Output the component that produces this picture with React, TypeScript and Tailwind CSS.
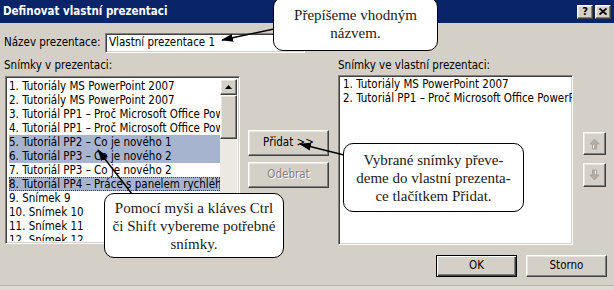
import React from "react";

const ui = { fontFamily: '"DejaVu Sans Condensed", "Liberation Sans", sans-serif' };
const serif = { fontFamily: '"Liberation Serif", "DejaVu Serif", serif' };

const raised =
  "border border-t-white border-l-white border-r-[#404040] border-b-[#404040] shadow-[inset_-1px_-1px_0_#808080,inset_1px_1px_0_#e8e6e0] bg-[#d4d0c8]";
const sunken =
  "border border-t-[#808080] border-l-[#808080] border-r-white border-b-white shadow-[inset_1px_1px_0_#404040,inset_-1px_-1px_0_#d4d0c8] bg-white";

const leftRows = [
  "1. Tutoriály MS PowerPoint 2007",
  "2. Tutoriály MS PowerPoint 2007",
  "3. Tutoriál PP1 – Proč Microsoft Office PowerPoint",
  "4. Tutoriál PP1 – Proč Microsoft Office PowerPoint",
  "5. Tutoriál PP2 – Co je nového 1",
  "6. Tutoriál PP3 – Co je nového 2",
  "7. Tutoriál PP3 – Co je nového 2",
  "8. Tutoriál PP4 – Práce s panelem rychlého přístupu",
  "9. Snímek 9",
  "10. Snímek 10",
  "11. Snímek 11",
  "12. Snímek 12",
];
const selected = [4, 5, 7];

function ArrowIcon({ down }: { down?: boolean }) {
  return (
    <svg width="11" height="12" viewBox="0 0 11 12" className={down ? "rotate-180" : ""}>
      <path d="M5.5 1 L10 6 L7.5 6 L7.5 11 L3.5 11 L3.5 6 L1 6 Z" fill="#b4b0a8" stroke="#a09c94" strokeWidth="0.8" />
      <path d="M4.5 7 L4.5 10.5" stroke="#ffffff" strokeWidth="0.8" />
    </svg>
  );
}

function Callout({ className, lines }: { className: string; lines: string[] }) {
  return (
    <div
      className={
        "absolute bg-white border border-black rounded-[10px] flex flex-col items-center justify-center text-[15px] leading-[18px] text-[#1a1a1a] " +
        className
      }
      style={serif}
    >
      {lines.map((l, i) => (
        <div key={i} className="whitespace-nowrap">
          {l}
        </div>
      ))}
    </div>
  );
}

export default function App() {
  return (
    <div className="w-[614px] h-[290px] bg-[#d4d0c8] relative overflow-hidden text-[11.5px] text-black" style={ui}>
      {/* title bar */}
      <div className="h-[23px] bg-[#0a246a] flex items-center justify-between pl-[3px] pr-[3px]">
        <span className="text-white font-bold text-[11.5px]">Definovat vlastní prezentaci</span>
        <div className="flex gap-[2px]">
          <div className={"w-[16px] h-[14px] flex items-center justify-center font-bold text-[11px] leading-none " + raised}>?</div>
          <div className={"w-[16px] h-[14px] flex items-center justify-center " + raised}>
            <svg width="8" height="7" viewBox="0 0 8 7">
              <path d="M0.5 0.5 L7.5 6.5 M7.5 0.5 L0.5 6.5" stroke="black" strokeWidth="1.8" />
            </svg>
          </div>
        </div>
      </div>

      {/* name row */}
      <div className="flex items-center h-[20px] mt-[10px] pl-[4px]">
        <span className="w-[101px]">Název prezentace:</span>
        <div className={"w-[200px] h-[20px] flex items-center pl-[3px] " + sunken}>Vlastní prezentace 1</div>
      </div>

      {/* main area */}
      <div className="flex mt-[5px]">
        {/* left column */}
        <div className="ml-[5px] w-[235px] flex flex-col">
          <div className="h-[14px] leading-[14px] -ml-[1px]">Snímky v prezentaci:</div>
          <div className={"mt-[4px] h-[168px] flex p-[2px] " + sunken}>
            <div className="flex-1 overflow-hidden pl-[1px]">
              {leftRows.map((r, i) => (
                <div
                  key={i}
                  className={
                    "h-[14px] leading-[14px] whitespace-nowrap overflow-hidden " +
                    (selected.includes(i) ? "bg-[#a7b4cf] " : "") +
                    (i === 7 ? "outline outline-1 outline-dotted outline-[#404040] -outline-offset-1" : "")
                  }
                >
                  {r}
                </div>
              ))}
            </div>
            <div className="w-[17px] flex flex-col bg-[#ece9e3]">
              <div className={"h-[16px] flex items-center justify-center " + raised}>
                <svg width="7" height="4" viewBox="0 0 7 4">
                  <path d="M3.5 0 L7 4 L0 4 Z" fill="black" />
                </svg>
              </div>
              <div className={"h-[44px] " + raised}></div>
            </div>
          </div>
        </div>

        {/* middle buttons */}
        <div className="ml-[8px] w-[81px] flex flex-col pt-[72px] gap-[6px]">
          <div className={"h-[26px] flex items-center justify-center " + raised}>Přidat &gt;&gt;</div>
          <div className={"h-[26px] flex items-center justify-center text-[#808080] [text-shadow:1px_1px_0_#ffffff] " + raised}>
            Odebrat
          </div>
        </div>

        {/* right column */}
        <div className="ml-[9px] w-[235px] flex flex-col">
          <div className="h-[14px] leading-[14px]">Snímky ve vlastní prezentaci:</div>
          <div className={"mt-[3px] h-[170px] p-[2px] pl-[4px] pt-[1px] overflow-hidden " + sunken}>
            <div className="h-[14px] leading-[14px] whitespace-nowrap">1. Tutoriály MS PowerPoint 2007</div>
            <div className="h-[14px] leading-[14px] whitespace-nowrap">2. Tutoriál PP1 – Proč Microsoft Office PowerPoint</div>
          </div>
        </div>

        {/* up/down */}
        <div className="ml-[10px] w-[23px] flex flex-col pt-[74px] gap-[8px]">
          <div className={"h-[23px] flex items-center justify-center " + raised}>
            <ArrowIcon />
          </div>
          <div className={"h-[24px] flex items-center justify-center " + raised}>
            <ArrowIcon down />
          </div>
        </div>
      </div>

      {/* bottom buttons */}
      <div className="flex justify-end gap-[9px] pr-[7px] mt-[10px]">
        <div className="w-[81px] h-[22px] flex items-center justify-center border border-black bg-[#d4d0c8] shadow-[inset_1px_1px_0_#ffffff,inset_-1px_-1px_0_#404040,inset_-2px_-2px_0_#808080]">
          OK
        </div>
        <div className={"w-[81px] h-[22px] flex items-center justify-center " + raised}>Storno</div>
      </div>

      <div className="absolute left-0 right-0 bottom-0 h-[5px] border-t border-[#b8b4ac] bg-[#dedbd5]"></div>

      {/* arrows */}
      <svg className="absolute left-0 top-0 pointer-events-none" width="614" height="290" viewBox="0 0 614 290">
        <defs>
          <marker id="ah" markerWidth="12" markerHeight="8" refX="11" refY="4" orient="auto" markerUnits="userSpaceOnUse">
            <path d="M0 0 L12 4 L0 8 Z" fill="black" />
          </marker>
        </defs>
        <line x1="274" y1="29" x2="222" y2="40" stroke="black" strokeWidth="1.4" markerEnd="url(#ah)" />
        <line x1="344" y1="155" x2="300" y2="144" stroke="black" strokeWidth="1.4" markerEnd="url(#ah)" />
        <line x1="132" y1="194" x2="98" y2="150" stroke="black" strokeWidth="1.4" markerEnd="url(#ah)" />
      </svg>

      {/* callouts */}
      <Callout className="left-[273px] top-[-3px] w-[165px] h-[54px]" lines={["Přepíšeme vhodným", "názvem."]} />
      <Callout
        className="left-[343px] top-[143px] w-[181px] h-[69px]"
        lines={["Vybrané snímky převe-", "deme do vlastní prezenta-", "ce tlačítkem Přidat."]}
      />
      <Callout
        className="left-[104px] top-[193px] w-[180px] h-[65px]"
        lines={["Pomocí myši a kláves Ctrl", "či Shift vybereme potřebné", "snímky."]}
      />
    </div>
  );
}
